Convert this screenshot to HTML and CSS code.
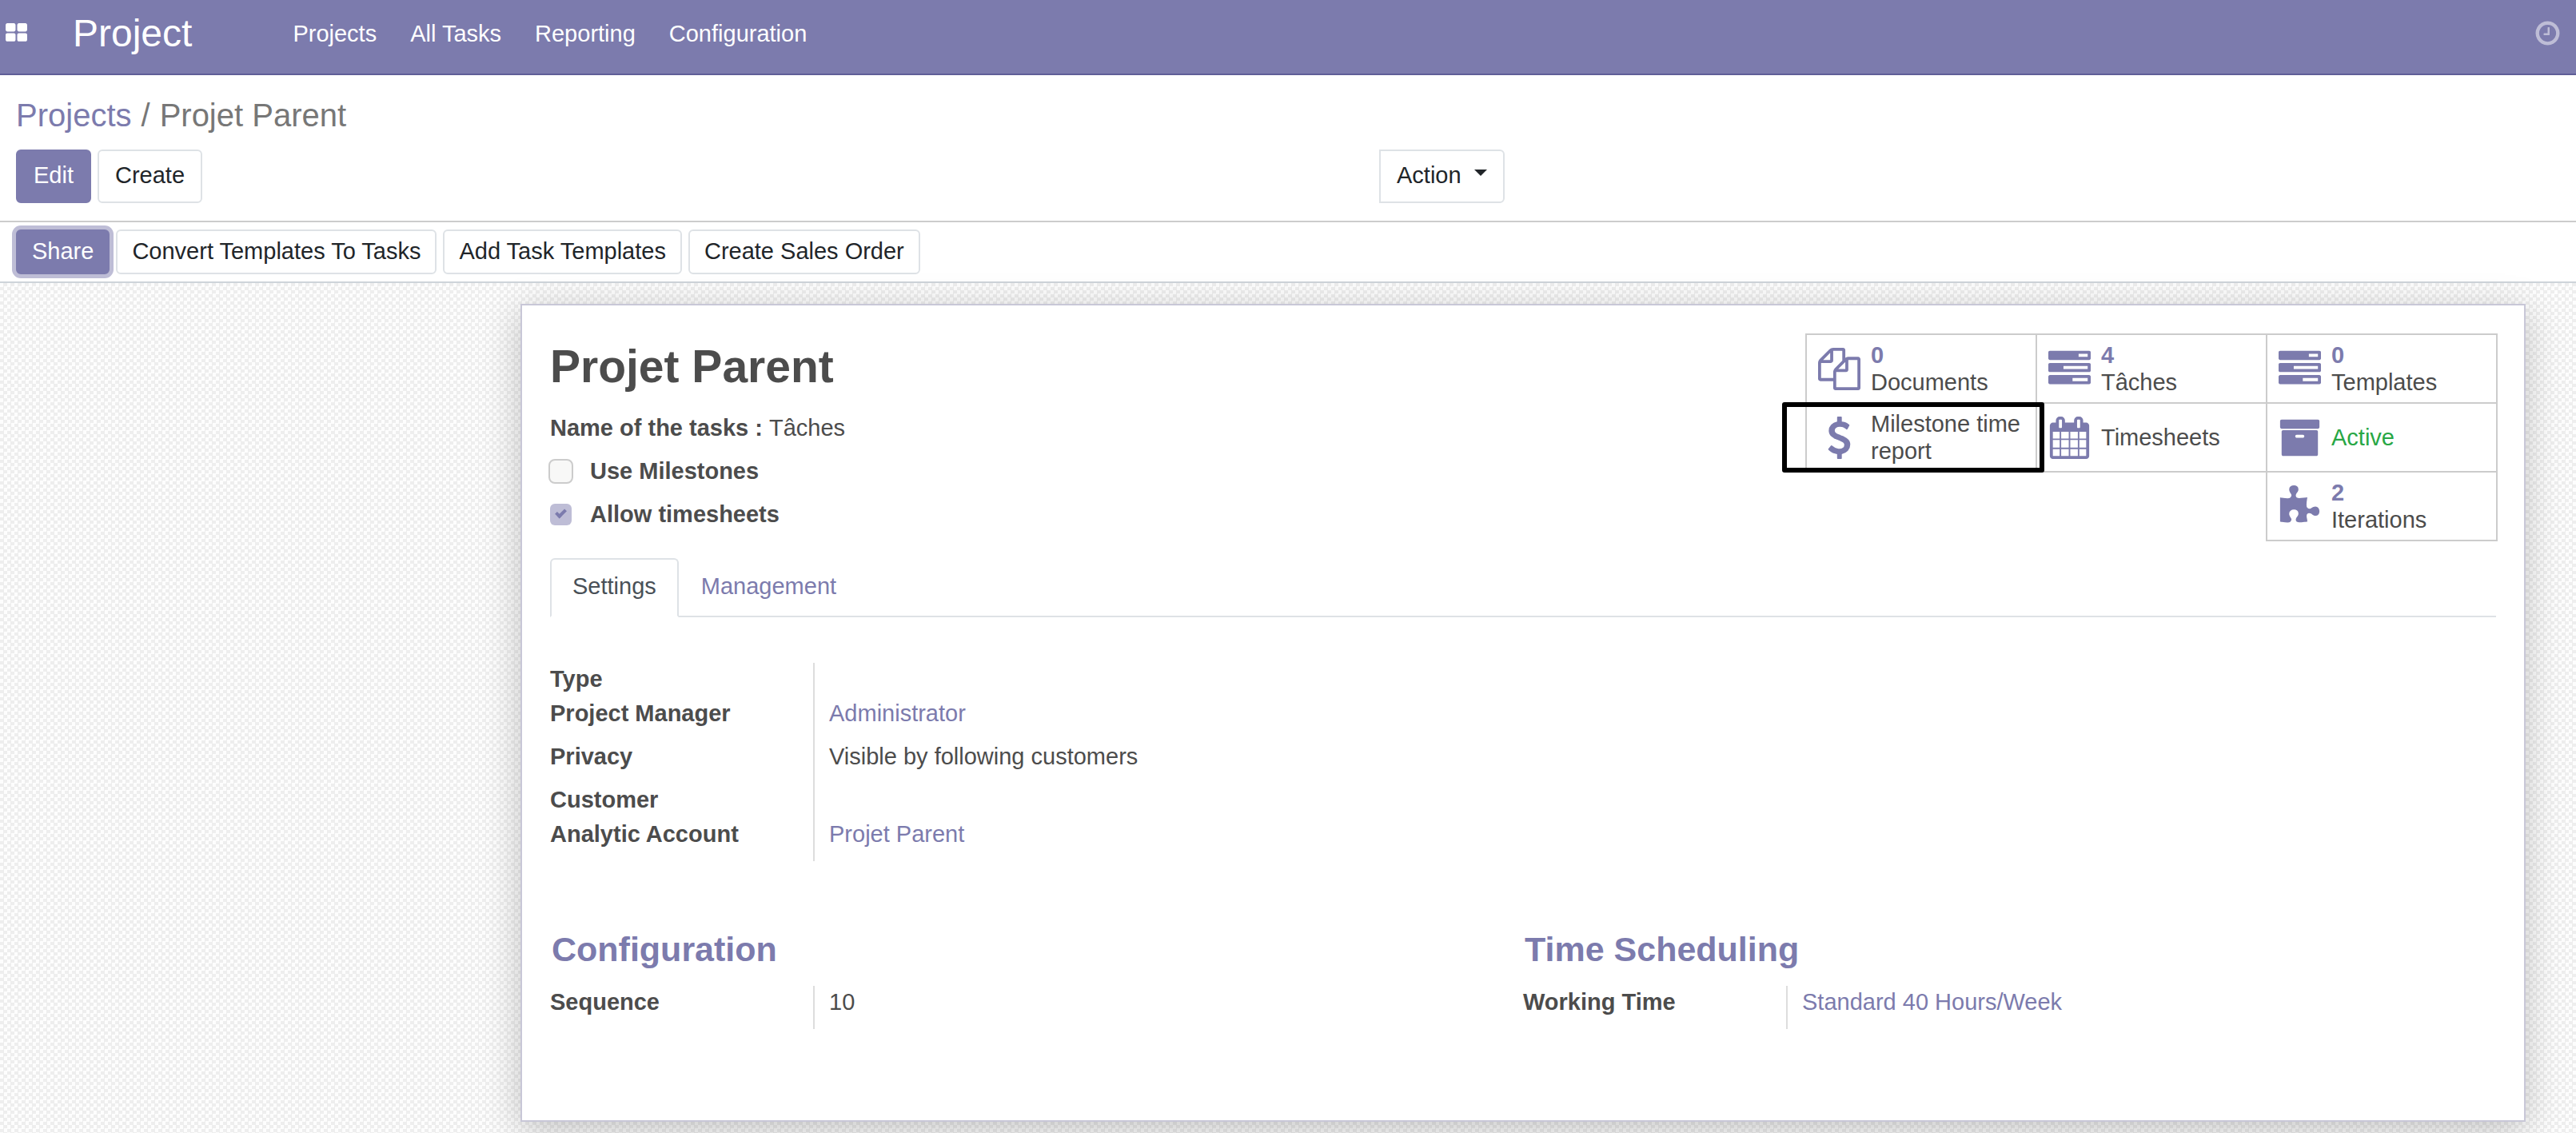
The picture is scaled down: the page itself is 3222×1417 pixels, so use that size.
FILE: index.html
```html
<!DOCTYPE html>
<html lang="en">
<head>
<meta charset="utf-8">
<title>Projet Parent - Project</title>
<link rel="stylesheet" href="styles.css">
</head>
<body>
<header class="navbar">
  <a class="apps" href="#" aria-label="Applications"><svg class="apps-icon" viewBox="0 0 1792 1792"><path d="M832 1024v384q0 52-38 90t-90 38h-512q-52 0-90-38t-38-90v-384q0-52 38-90t90-38h512q52 0 90 38t38 90zm0-768v384q0 52-38 90t-90 38h-512q-52 0-90-38t-38-90v-384q0-52 38-90t90-38h512q52 0 90 38t38 90zm896 768v384q0 52-38 90t-90 38h-512q-52 0-90-38t-38-90v-384q0-52 38-90t90-38h512q52 0 90 38t38 90zm0-768v384q0 52-38 90t-90 38h-512q-52 0-90-38t-38-90v-384q0-52 38-90t90-38h512q52 0 90 38t38 90z"/></svg></a>
  <a class="brand" href="#">Project</a>
  <nav class="menu">
    <a href="#">Projects</a>
    <a href="#">All Tasks</a>
    <a href="#">Reporting</a>
    <a href="#">Configuration</a>
  </nav>
  <a class="activities" href="#" aria-label="Activities"><svg class="clock-icon" viewBox="0 0 1792 1792"><path d="M1024 544v448q0 14-9 23t-23 9h-320q-14 0-23-9t-9-23v-64q0-14 9-23t23-9h224v-352q0-14 9-23t23-9h64q14 0 23 9t9 23zm416 352q0-148-73-273t-198-198-273-73-273 73-198 198-73 273 73 273 198 198 273 73 273-73 198-198 73-273zm224 0q0 209-103 385.500t-279.500 279.500-385.500 103-385.500-103-279.500-279.500-103-385.500 103-385.500 279.500-279.500 385.500-103 385.500 103 279.500 279.500 103 385.500z"/></svg></a>
</header>

<section class="control-panel">
  <nav class="breadcrumb" aria-label="Breadcrumb">
    <a href="#">Projects</a><span class="slash">/</span><span>Projet Parent</span>
  </nav>
  <div class="controls">
    <div class="controls-left">
      <button class="btn btn-tall btn-primary" type="button">Edit</button>
      <button class="btn btn-tall" type="button">Create</button>
    </div>
    <div class="controls-right">
      <button class="btn btn-tall btn-action" type="button">Action<span class="caret"></span></button>
    </div>
  </div>
</section>

<div class="statusbar">
  <button class="btn btn-primary btn-focus" type="button">Share</button>
  <button class="btn" type="button">Convert Templates To Tasks</button>
  <button class="btn" type="button">Add Task Templates</button>
  <button class="btn" type="button">Create Sales Order</button>
</div>

<main class="form-view">
  <article class="sheet">
    <div class="sheet-top">
      <div class="title-area">
        <h1 class="title">Projet Parent</h1>
        <p class="task-name"><strong>Name of the tasks :</strong><span>Tâches</span></p>
        <div class="check-row"><input class="check" type="checkbox" id="milestones"><label for="milestones">Use Milestones</label></div>
        <div class="check-row"><input class="check" type="checkbox" id="timesheets" checked><label for="timesheets">Allow timesheets</label></div>
      </div>
      <div class="stats">
        <button class="stat" type="button">
          <svg class="stat-icon" viewBox="0 0 1792 1792"><path d="M1696 384q40 0 68 28t28 68v1216q0 40-28 68t-68 28h-960q-40 0-68-28t-28-68v-288h-544q-40 0-68-28t-28-68v-672q0-40 20-88t48-76l408-408q28-28 76-48t88-20h416q40 0 68 28t28 68v328q68-40 128-40h416zm-544 213l-299 299h299v-299zm-640-384l-299 299h299v-299zm196 647l316-316v-416h-384v416q0 40-28 68t-68 28h-416v640h512v-256q0-40 20-88t48-76zm956 804v-1152h-384v416q0 40-28 68t-68 28h-416v640h896z"/></svg>
          <span class="stat-text"><b>0</b><span>Documents</span></span>
        </button>
        <button class="stat" type="button">
          <svg class="stat-icon" viewBox="0 0 1792 1792"><path d="M1024 1408h640v-128h-640v128zm-384-512h1024v-128h-1024v128zm640-512h384v-128h-384v128zm512 832v256q0 26-19 45t-45 19h-1664q-26 0-45-19t-19-45v-256q0-26 19-45t45-19h1664q26 0 45 19t19 45zm0-512v256q0 26-19 45t-45 19h-1664q-26 0-45-19t-19-45v-256q0-26 19-45t45-19h1664q26 0 45 19t19 45zm0-512v256q0 26-19 45t-45 19h-1664q-26 0-45-19t-19-45v-256q0-26 19-45t45-19h1664q26 0 45 19t19 45z"/></svg>
          <span class="stat-text"><b>4</b><span>Tâches</span></span>
        </button>
        <button class="stat" type="button">
          <svg class="stat-icon" viewBox="0 0 1792 1792"><path d="M1024 1408h640v-128h-640v128zm-384-512h1024v-128h-1024v128zm640-512h384v-128h-384v128zm512 832v256q0 26-19 45t-45 19h-1664q-26 0-45-19t-19-45v-256q0-26 19-45t45-19h1664q26 0 45 19t19 45zm0-512v256q0 26-19 45t-45 19h-1664q-26 0-45-19t-19-45v-256q0-26 19-45t45-19h1664q26 0 45 19t19 45zm0-512v256q0 26-19 45t-45 19h-1664q-26 0-45-19t-19-45v-256q0-26 19-45t45-19h1664q26 0 45 19t19 45z"/></svg>
          <span class="stat-text"><b>0</b><span>Templates</span></span>
        </button>
        <button class="stat stat-marked" type="button">
          <svg class="stat-icon" viewBox="0 0 1792 1792"><path d="M1362 1185q0 153-99.500 263.500t-258.500 136.500v175q0 14-9 23t-23 9h-135q-13 0-22.500-9.500t-9.500-22.500v-175q-66-9-127.500-31t-101.500-44.500-74-48-46.500-37.500-17.500-18q-17-21-2-41l103-135q7-10 23-12 15-2 24 9l2 2q113 99 243 125 37 8 74 8 81 0 142.500-43t61.500-122q0-28-15-53t-33.500-42-58.500-37.500-66-32-80-32.500q-39-16-61.500-25t-61.500-26.500-62.500-31-56.500-35.500-53.500-42.500-43.500-49-35.500-58-21-66.500-8.500-78q0-138 98-242t255-134v-180q0-13 9.500-22.500t22.500-9.500h135q14 0 23 9t9 23v176q57 6 110.500 23t87 33.500 63.500 37.500 39 29 15 14q17 18 5 38l-81 146q-8 15-23 16-14 3-27-7-3-3-14.500-12t-39-26.500-58.500-32-74.500-26-85.500-11.500q-95 0-155 43t-60 111q0 26 8.500 48t29.500 41.500 39.500 33 56 31 60.500 27 70 27.500q53 20 81 31.500t76 35 75.500 42.500 62 50 53 63.500 31.500 76.500 13 94z"/></svg>
          <span class="stat-text"><span>Milestone time report</span></span>
        </button>
        <button class="stat" type="button">
          <svg class="stat-icon" viewBox="0 0 1792 1792"><path d="M192 1664h288v-288h-288v288zm352 0h320v-288h-320v288zm-352-352h288v-320h-288v320zm352 0h320v-320h-320v320zm-352-384h288v-288h-288v288zm736 736h320v-288h-320v288zm-384-736h320v-288h-320v288zm768 736h288v-288h-288v288zm-384-352h320v-320h-320v320zm-352-864v-288q0-13-9.500-22.500t-22.500-9.500h-64q-13 0-22.500 9.500t-9.500 22.500v288q0 13 9.500 22.500t22.500 9.500h64q13 0 22.500-9.500t9.500-22.500zm736 864h288v-320h-288v320zm-384-384h320v-288h-320v288zm384 0h288v-288h-288v288zm32-480v-288q0-13-9.500-22.500t-22.500-9.500h-64q-13 0-22.500 9.500t-9.500 22.500v288q0 13 9.500 22.500t22.500 9.500h64q13 0 22.500-9.500t9.500-22.500zm384-64v1280q0 52-38 90t-90 38h-1408q-52 0-90-38t-38-90v-1280q0-52 38-90t90-38h128v-96q0-66 47-113t113-47h64q66 0 113 47t47 113v96h384v-96q0-66 47-113t113-47h64q66 0 113 47t47 113v96h128q52 0 90 38t38 90z"/></svg>
          <span class="stat-text"><span>Timesheets</span></span>
        </button>
        <button class="stat" type="button">
          <svg class="stat-icon" viewBox="0 0 1792 1792"><path d="M1088 832q0-26-19-45t-45-19h-256q-26 0-45 19t-19 45 19 45 45 19h256q26 0 45-19t19-45zm576-192v960q0 26-19 45t-45 19h-1408q-26 0-45-19t-19-45v-960q0-26 19-45t45-19h1408q26 0 45 19t19 45zm64-448v256q0 26-19 45t-45 19h-1536q-26 0-45-19t-19-45v-256q0-26 19-45t45-19h1536q26 0 45 19t19 45z"/></svg>
          <span class="stat-text"><span class="active-text">Active</span></span>
        </button>
        <button class="stat" type="button">
          <svg class="stat-icon" viewBox="0 0 1792 1792"><path d="M1728 1098q0 81-44.500 135t-123.500 54q-41 0-77.500-17.500t-59-38-56.500-38-71-17.500q-110 0-110 124 0 39 16 115t15 115v5q-22 0-33 1-34 3-97.500 11.500t-115.500 13.500-98 5q-61 0-103-26.500t-42-83.500q0-37 17.500-71t38-56.500 38-59 17.500-77.500q0-79-54-123.500t-135-44.500q-84 0-143 45.500t-59 127.500q0 43 15 83t33.500 64.500 33.500 53 15 50.500q0 45-46 89-37 35-117 35-95 0-245-24-9-2-27.500-4t-27.500-4l-13-2q-1 0-3-1-2 0-2-1v-1024q2 1 17.500 3.500t34 5 21.500 3.500q150 24 245 24 80 0 117-35 46-44 46-89 0-22-15-50.500t-33.500-53-33.500-64.500-15-83q0-82 59-127.500t144-45.500q80 0 134 44.500t54 123.500q0 41-17.500 77.500t-38 59-38 56.500-17.500 71q0 57 42 83.500t103 26.500q64 0 180-15t163-17v2q-1 2-3.500 17.500t-5 34-3.500 21.500q-24 150-24 245 0 80 35 117 44 46 89 46 22 0 50.500-15t53-33.500 64.500-33.500 83-15q82 0 127.500 59t45.500 143z"/></svg>
          <span class="stat-text"><b>2</b><span>Iterations</span></span>
        </button>
      </div>
    </div>

    <nav class="tabs">
      <a class="tab tab-active" href="#">Settings</a>
      <a class="tab" href="#">Management</a>
    </nav>

    <dl class="fields fields-main">
      <dt>Type</dt><dd></dd>
      <dt>Project Manager</dt><dd class="filled"><a href="#">Administrator</a></dd>
      <dt>Privacy</dt><dd class="filled">Visible by following customers</dd>
      <dt>Customer</dt><dd></dd>
      <dt>Analytic Account</dt><dd class="filled"><a href="#">Projet Parent</a></dd>
    </dl>

    <div class="groups">
      <section>
        <h2 class="group-title">Configuration</h2>
        <dl class="fields"><dt>Sequence</dt><dd class="filled">10</dd></dl>
      </section>
      <section>
        <h2 class="group-title">Time Scheduling</h2>
        <dl class="fields"><dt>Working Time</dt><dd class="filled"><a href="#">Standard 40 Hours/Week</a></dd></dl>
      </section>
    </div>
  </article>
</main>
</body>
</html>
```
FILE: styles.css
```css
:root {
  --brand: #7c7bad;
  --text: #4c4c4c;
  --border: #dee2e6;
}

* { box-sizing: border-box; }

body {
  margin: 0;
  min-height: 100vh;
  display: flex;
  flex-direction: column;
  background: #fff;
  color: var(--text);
  font: 29px/42px "Liberation Sans", Arial, sans-serif;
}

a { color: var(--brand); text-decoration: none; }
svg { display: block; fill: currentColor; }

/* Top navigation */
.navbar {
  display: flex;
  align-items: center;
  height: 94px;
  padding: 0 18px 8px 6px;
  background: var(--brand);
  border-bottom: 2px solid #5f5e97;
}
.navbar a { color: #fff; }
.navbar .apps, .navbar .activities { margin-bottom: 2px; }
.apps-icon { width: 29px; height: 29px; }
.brand { margin: 0 126px 0 56px; font-size: 48px; }
.menu { display: flex; gap: 42px; }
.navbar .activities { margin-left: auto; color: #bebdd6; }
.clock-icon { width: 35px; height: 35px; }

/* Breadcrumb and record buttons */
.control-panel {
  padding: 20px 20px 22px;
  border-bottom: 2px solid #ccc;
}
.breadcrumb {
  display: flex;
  margin-bottom: 13px;
  font-size: 40px;
  line-height: 60px;
  color: #777;
}
.slash { padding: 0 12px; }
.controls { display: grid; grid-template-columns: 1705fr 1477fr; }
.controls-left { display: flex; gap: 8px; }

.btn {
  padding: 4px 18px 6px;
  border: 2px solid var(--border);
  border-radius: 6px;
  background: #fff;
  color: #212529;
  font: inherit;
}
.btn-tall { padding: 9px 20px 12px; }
.btn-primary { background: var(--brand); border-color: var(--brand); color: #fff; }
.btn-focus { box-shadow: 0 0 0 5px #bebdd6; }
.btn-action {
  display: flex;
  align-items: center;
  gap: 16px;
  border-radius: 0 6px 6px 0;
}
.caret {
  margin-bottom: 6px;
  border: 8px solid transparent;
  border-top-color: currentColor;
  border-bottom-width: 0;
}

.statusbar {
  display: flex;
  gap: 8px;
  padding: 9px 20px;
  border-bottom: 2px solid #ced4da;
}

/* Form background and sheet */
.form-view {
  flex: 1;
  padding: 26px 63px 14px 651px;
  background: repeating-conic-gradient(#eee 0 25%, #fdfdfd 0 50%) 0 0 / 9px 9px;
}
.sheet {
  padding: 35px 35px 114px;
  background: #fff;
  border: 2px solid #c8c7d7;
  box-shadow: 0 10px 44px rgba(0, 0, 0, 0.22);
}
.sheet-top { display: flex; justify-content: space-between; }
.title { margin: 0 0 15px; font-size: 57px; line-height: 82px; }
.task-name { display: flex; gap: 8px; margin: 0 0 12px; }
.check-row {
  display: flex;
  align-items: center;
  margin: 0 0 12px -2px;
  font-weight: bold;
}
.check {
  appearance: none;
  width: 31px;
  height: 31px;
  margin: 0 21px 0 0;
  border: 2px solid #ccc;
  border-radius: 8px;
  background: #f8f8f7;
}
.check:checked {
  border-color: transparent;
  background: #bebdd6 padding-box;
}
.check:checked::before {
  content: "";
  display: block;
  box-sizing: border-box;
  width: 13px;
  height: 8px;
  margin: 7px 0 0 7px;
  border: solid var(--brand);
  border-width: 0 0 4px 4px;
  rotate: -45deg;
}

/* Stat buttons */
.stats {
  display: flex;
  flex-wrap: wrap;
  justify-content: flex-end;
  align-content: flex-start;
  width: 868px;
  margin-right: -2px;
}
.stat {
  position: relative;
  display: flex;
  align-items: center;
  gap: 13px;
  width: 290px;
  height: 88px;
  margin: 0 0 -2px -2px;
  padding: 0 12px 0 14px;
  border: 2px solid #ccc;
  background: #fff;
  color: var(--text);
  font: inherit;
  line-height: 34px;
  text-align: left;
}
.stat-icon { flex: none; width: 53px; height: 53px; color: var(--brand); }
.stat-text { display: flex; flex-direction: column; }
.stat-text b { color: var(--brand); }
.active-text { color: #28a745; }
.stat-marked { z-index: 1; background: none; }
.stat-marked::after {
  content: "";
  position: absolute;
  inset: -2px -11px -2px -31px;
  border: 6px solid #000;
  border-radius: 3px;
}

/* Tabs */
.tabs {
  display: flex;
  margin: 22px 0 57px;
  border-bottom: 2px solid var(--border);
}
.tab {
  margin-bottom: -2px;
  padding: 12px 26px 16px;
  border: 2px solid transparent;
  border-radius: 6px 6px 0 0;
}
.tab-active {
  border-color: var(--border) var(--border) #fff;
  background: #fff;
  color: #495057;
}

/* Field groups */
.fields {
  display: grid;
  grid-template-columns: 331px 1fr;
  margin: 0;
  line-height: 40px;
}
.fields-main { margin-bottom: 79px; }
dt { border-right: 2px solid #ddd; font-weight: bold; }
dd { margin: 0; padding: 0 0 3px 18px; }
dd:empty { min-height: 43px; }
dd.filled { padding-bottom: 14px; }
.groups { display: grid; grid-template-columns: 1fr 1fr; }
.group-title {
  margin: 0 0 15px;
  padding-left: 2px;
  color: var(--brand);
  font-size: 43px;
  line-height: 62px;
}
```
